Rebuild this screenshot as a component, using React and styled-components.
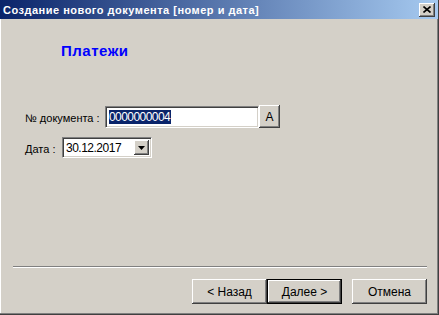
import React from 'react';
import styled, { createGlobalStyle } from 'styled-components';

const GlobalStyle = createGlobalStyle`
  html, body {
    margin: 0;
    padding: 0;
    background: #d4d0c8;
  }
  body {
    font-family: "Liberation Sans", Arial, sans-serif;
  }
`;

const Window = styled.div`
  width: 439px;
  height: 315px;
  box-sizing: border-box;
  display: flex;
  flex-direction: column;
  background: #d4d0c8;
  border-right: 1px solid #404040;
  border-bottom: 1px solid #404040;
  box-shadow: inset -1px -1px 0 #808080, inset 1px 0 0 #ffffff;
  overflow: hidden;
`;

const TitleBar = styled.div`
  height: 19px;
  flex: none;
  display: flex;
  align-items: center;
  justify-content: space-between;
  padding: 0 3px 0 3px;
  background: linear-gradient(to right, #0a246a, #a6caf0);
`;

const TitleText = styled.span`
  color: #fff;
  font-family: "Liberation Sans", Arial, sans-serif;
  font-weight: bold;
  font-size: 11px;
  letter-spacing: 0.5px;
  white-space: nowrap;
`;

const CloseButton = styled.div`
  width: 16px;
  height: 14px;
  box-sizing: border-box;
  background: #d4d0c8;
  display: flex;
  align-items: center;
  justify-content: center;
  box-shadow: inset -1px -1px 0 #404040, inset 1px 1px 0 #ffffff,
    inset -2px -2px 0 #808080;
`;

const Body = styled.div`
  flex: 1;
  display: flex;
  flex-direction: column;
`;

const Heading = styled.div`
  margin: 23px 0 0 61px;
  color: #0000ff;
  font-weight: bold;
  font-size: 15px;
  line-height: 18px;
  letter-spacing: 0.5px;
`;

const Form = styled.div`
  margin: 45px 0 0 25px;
  display: flex;
  flex-direction: column;
  gap: 9px;
`;

const Row = styled.div`
  display: flex;
  align-items: center;
`;

const Label = styled.span`
  width: ${(p) => p.$w}px;
  font-size: 11px;
  color: #000;
  white-space: nowrap;
  padding-top: ${(p) => p.$pt || 0}px;
`;

const Sunken = styled.div`
  box-sizing: border-box;
  width: ${(p) => p.$w}px;
  height: ${(p) => p.$h}px;
  background: #fff;
  display: flex;
  align-items: center;
  padding: 0 2px 0 3px;
  border-top: 1px solid #808080;
  border-left: 1px solid #808080;
  border-right: 1px solid #ffffff;
  border-bottom: 1px solid #ffffff;
  box-shadow: inset 1px 1px 0 #404040, inset -1px -1px 0 #d4d0c8;
`;

const Selected = styled.span`
  background: #0a246a;
  color: #fff;
  font-size: 12px;
  line-height: 14px;
  letter-spacing: -0.55px;
  padding-right: 1px;
`;

const Value = styled.span`
  flex: 1;
  font-size: 12px;
  letter-spacing: -0.5px;
  color: #000;
`;

const SmallButton = styled.div`
  box-sizing: border-box;
  width: ${(p) => p.$w}px;
  height: ${(p) => p.$h}px;
  flex: none;
  background: #d4d0c8;
  display: flex;
  align-items: center;
  justify-content: center;
  font-size: 12px;
  color: #000;
  box-shadow: inset -1px -1px 0 #404040, inset 1px 1px 0 #ffffff,
    inset -2px -2px 0 #808080;
`;

const Footer = styled.div`
  margin-top: auto;
  display: flex;
  flex-direction: column;
  padding: 0 11px 10px 13px;
`;

const Separator = styled.div`
  height: 1px;
  background: #808080;
  border-bottom: 1px solid #ffffff;
`;

const ButtonRow = styled.div`
  display: flex;
  justify-content: flex-end;
  margin-top: 11px;
`;

const Button = styled.div`
  box-sizing: border-box;
  width: ${(p) => (p.$w ? p.$w : 75)}px;
  height: 25px;
  margin-left: ${(p) => p.$ml || 0}px;
  background: #d4d0c8;
  display: flex;
  align-items: center;
  justify-content: center;
  font-size: 12px;
  color: #000;
  border: ${(p) => (p.$default ? '1px solid #000' : 'none')};
  box-shadow: inset -1px -1px 0 #404040, inset 1px 1px 0 #ffffff,
    inset -2px -2px 0 #808080;
`;

const Arrow = () => (
  <svg width="7" height="4" viewBox="0 0 7 4">
    <path d="M0 0h7L3.5 4z" fill="#000" />
  </svg>
);

const CloseX = () => (
  <svg width="8" height="7" viewBox="0 0 8 7">
    <path d="M0.5 0.5L7.5 6.5M7.5 0.5L0.5 6.5" stroke="#000" strokeWidth="1.6" />
  </svg>
);

export default function App() {
  return (
    <>
      <GlobalStyle />
      <Window>
        <TitleBar>
          <TitleText>Создание нового документа [номер и дата]</TitleText>
          <CloseButton>
            <CloseX />
          </CloseButton>
        </TitleBar>
        <Body>
          <Heading>Платежи</Heading>
          <Form>
            <Row>
              <Label $w={80} $pt={3}>№ документа :</Label>
              <Sunken $w={154} $h={22}>
                <Selected>0000000004</Selected>
              </Sunken>
              <SmallButton $w={21} $h={23}>A</SmallButton>
            </Row>
            <Row>
              <Label $w={37} $pt={3}>Дата :</Label>
              <Sunken $w={90} $h={21}>
                <Value>30.12.2017</Value>
                <SmallButton $w={15} $h={15}>
                  <Arrow />
                </SmallButton>
              </Sunken>
            </Row>
          </Form>
        </Body>
        <Footer>
          <Separator />
          <ButtonRow>
            <Button>&lt; Назад</Button>
            <Button $default>Далее &gt;</Button>
            <Button $ml={10}>Отмена</Button>
          </ButtonRow>
        </Footer>
      </Window>
    </>
  );
}
